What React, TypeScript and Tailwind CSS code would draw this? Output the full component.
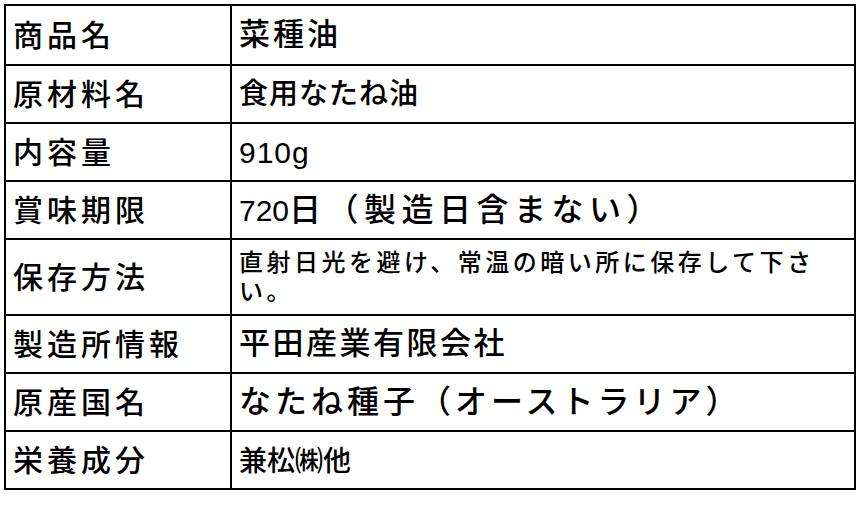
import React from "react";

const font = { fontFamily: '"Liberation Sans", "Noto Sans CJK JP", sans-serif' };

const rows: { label: string; value: React.ReactNode; tall?: boolean }[] = [
  { label: "商品名", value: <span className="text-[31px] tracking-[3px]">菜種油</span> },
  { label: "原材料名", value: <span className="text-[29px] tracking-[1px]">食用なたね油</span> },
  { label: "内容量", value: <span className="font-normal tracking-[1px]">910g</span> },
  {
    label: "賞味期限",
    value: (
      <>
        <span className="font-normal">720</span>
        <span className="text-[32px] tracking-[5.5px]">日（製造日含まない）</span>
      </>
    ),
  },
  {
    label: "保存方法",
    tall: true,
    value: (
      <span className="text-[24px] leading-[29px] tracking-[3.5px] block">
        直射日光を避け、常温の暗い所に保存して下さ
        <br />
        い。
      </span>
    ),
  },
  { label: "製造所情報", value: <span className="text-[31px] tracking-[2.5px]">平田産業有限会社</span> },
  { label: "原産国名", value: <span className="text-[32px] tracking-[4px]">なたね種子（オーストラリア）</span> },
  { label: "栄養成分", value: <span className="text-[28px] tracking-[0px]">兼松㈱他</span> },
];

export default function App() {
  return (
    <div className="w-[864px] h-[514px] bg-white text-black font-medium" style={font}>
      <div className="ml-[4px] mt-[4px] w-[852px] border-2 border-black">
        {rows.map((r, i) => (
          <div
            key={i}
            className={`flex ${i > 0 ? "border-t-2 border-black" : ""} ${r.tall ? "h-[76px]" : "h-[58px]"}`}
          >
            <div className="w-[226px] shrink-0 border-r-2 border-black flex items-center pl-[7px] text-[30px] tracking-[4px]">
              {r.label}
            </div>
            <div className="flex-1 flex items-center pl-[7px] text-[30px]">
              <div>{r.value}</div>
            </div>
          </div>
        ))}
      </div>
    </div>
  );
}
